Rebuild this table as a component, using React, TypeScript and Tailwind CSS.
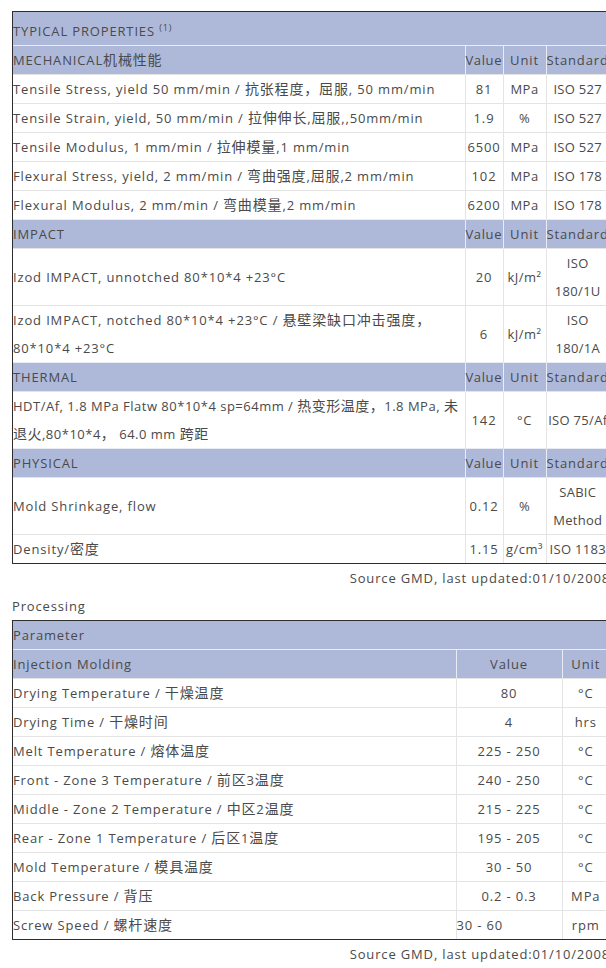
import React from "react";

type Row = { label: string; value: string; unit: string; std: string; tight?: boolean };

const sections: { title: string; rows: Row[] }[] = [
  {
    title: "MECHANICAL机械性能",
    rows: [
      { label: "Tensile Stress, yield 50 mm/min / 抗张程度，屈服, 50 mm/min", value: "81", unit: "MPa", std: "ISO 527" },
      { label: "Tensile Strain, yield, 50 mm/min / 拉伸伸长,屈服,,50mm/min", value: "1.9", unit: "%", std: "ISO 527" },
      { label: "Tensile Modulus, 1 mm/min / 拉伸模量,1 mm/min", value: "6500", unit: "MPa", std: "ISO 527" },
      { label: "Flexural Stress, yield, 2 mm/min / 弯曲强度,屈服,2 mm/min", value: "102", unit: "MPa", std: "ISO 178" },
      { label: "Flexural Modulus, 2 mm/min / 弯曲模量,2 mm/min", value: "6200", unit: "MPa", std: "ISO 178" },
    ],
  },
  {
    title: "IMPACT",
    rows: [
      { label: "Izod IMPACT, unnotched 80*10*4 +23°C", value: "20", unit: "kJ/m²", std: "ISO 180/1U" },
      { label: "Izod IMPACT, notched 80*10*4 +23°C / 悬壁梁缺口冲击强度，80*10*4 +23°C", value: "6", unit: "kJ/m²", std: "ISO 180/1A" },
    ],
  },
  {
    title: "THERMAL",
    rows: [
      {
        label: "HDT/Af, 1.8 MPa Flatw 80*10*4 sp=64mm / 热变形温度，1.8 MPa, 未退火,80*10*4， 64.0 mm 跨距",
        value: "142",
        unit: "°C",
        std: "ISO 75/Af",
        tight: true,
      },
    ],
  },
  {
    title: "PHYSICAL",
    rows: [
      { label: "Mold Shrinkage, flow", value: "0.12", unit: "%", std: "SABIC Method" },
      { label: "Density/密度", value: "1.15", unit: "g/cm³", std: "ISO 1183" },
    ],
  },
];

const processing = [
  { label: "Drying Temperature / 干燥温度", value: "80", unit: "°C" },
  { label: "Drying Time / 干燥时间", value: "4", unit: "hrs" },
  { label: "Melt Temperature / 熔体温度", value: "225 - 250", unit: "°C" },
  { label: "Front - Zone 3 Temperature / 前区3温度", value: "240 - 250", unit: "°C" },
  { label: "Middle - Zone 2 Temperature / 中区2温度", value: "215 - 225", unit: "°C" },
  { label: "Rear - Zone 1 Temperature / 后区1温度", value: "195 - 205", unit: "°C" },
  { label: "Mold Temperature / 模具温度", value: "30 - 50", unit: "°C" },
  { label: "Back Pressure / 背压", value: "0.2 - 0.3", unit: "MPa" },
  { label: "Screw Speed / 螺杆速度", value: "30 - 60", unit: "rpm", left: true },
];

const head = "bg-[#aeb9da] border-[#e9ecf5]";
const body = "border-[#e4e4e4]";

// CJK glyphs render a touch larger than the latin text in the original
function Mixed({ text }: { text: string }) {
  const parts = text.split(/([\u3000-\u9fff\uff00-\uffef]+)/);
  return (
    <>
      {parts.map((p, i) =>
        i % 2 === 1 ? (
          <span key={i} className="text-[14px]">
            {p}
          </span>
        ) : (
          p
        )
      )}
    </>
  );
}

export default function App() {
  return (
    <div
      className="w-[606px] h-[968px] overflow-hidden bg-white text-[13px] leading-[28px] tracking-[0.85px] text-[#4a4a4a]"
      style={{ fontFamily: '"Open Sans", "Noto Sans CJK SC", sans-serif' }}
    >
      <div className="w-[598px] ml-[12px] pt-[11px]">
        <div className="border border-[#2e2e2e]">
          <table className="w-full table-fixed border-collapse">
            <colgroup>
              <col className="w-[452px]" />
              <col className="w-[38px]" />
              <col className="w-[43px]" />
              <col />
            </colgroup>
            <tbody>
              <tr className={head}>
                <td colSpan={4} className="p-0 h-[33px] align-bottom">
                  TYPICAL PROPERTIES <sup className="text-[9px]">(1)</sup>
                </td>
              </tr>
              {sections.map((s) => (
                <React.Fragment key={s.title}>
                  <tr>
                    <td className={`${head} p-0 border-t`}>
                      <Mixed text={s.title} />
                    </td>
                    <td className={`${head} p-0 border-t border-l whitespace-nowrap tracking-[0.6px]`}>Value</td>
                    <td className={`${head} p-0 border-t border-l text-center`}>Unit</td>
                    <td className={`${head} p-0 border-t border-l whitespace-nowrap`}>Standard</td>
                  </tr>
                  {s.rows.map((r) => (
                    <tr key={r.label}>
                      <td className={`${body} p-0 border-t align-middle ${r.tight ? "tracking-[0.5px]" : ""}`}>
                        <Mixed text={r.label} />
                      </td>
                      <td className={`${body} p-0 border-t border-l text-center`}>{r.value}</td>
                      <td className={`${body} p-0 border-t border-l text-center whitespace-nowrap tracking-[0.5px]`}>{r.unit}</td>
                      <td className={`${body} p-0 border-t border-l text-center tracking-[0.3px]`}>{r.std}</td>
                    </tr>
                  ))}
                </React.Fragment>
              ))}
            </tbody>
          </table>
        </div>
        <div className="text-right whitespace-nowrap">Source GMD, last updated:01/10/2008</div>
        <div>Processing</div>
        <div className="border border-[#2e2e2e]">
          <table className="w-full table-fixed border-collapse">
            <colgroup>
              <col className="w-[443px]" />
              <col className="w-[106px]" />
              <col />
            </colgroup>
            <tbody>
              <tr className={head}>
                <td colSpan={3} className="p-0">Parameter</td>
              </tr>
              <tr>
                <td className={`${head} p-0 border-t`}>Injection Molding</td>
                <td className={`${head} p-0 border-t border-l text-center`}>Value</td>
                <td className={`${head} p-0 border-t border-l text-center`}>Unit</td>
              </tr>
              {processing.map((r) => (
                <tr key={r.label}>
                  <td className={`${body} p-0 border-t`}>
                    <Mixed text={r.label} />
                  </td>
                  <td className={`${body} p-0 border-t border-l ${r.left ? "text-left" : "text-center"}`}>{r.value}</td>
                  <td className={`${body} p-0 border-t border-l text-center`}>{r.unit}</td>
                </tr>
              ))}
            </tbody>
          </table>
        </div>
        <div className="text-right whitespace-nowrap">Source GMD, last updated:01/10/2008</div>
      </div>
    </div>
  );
}
